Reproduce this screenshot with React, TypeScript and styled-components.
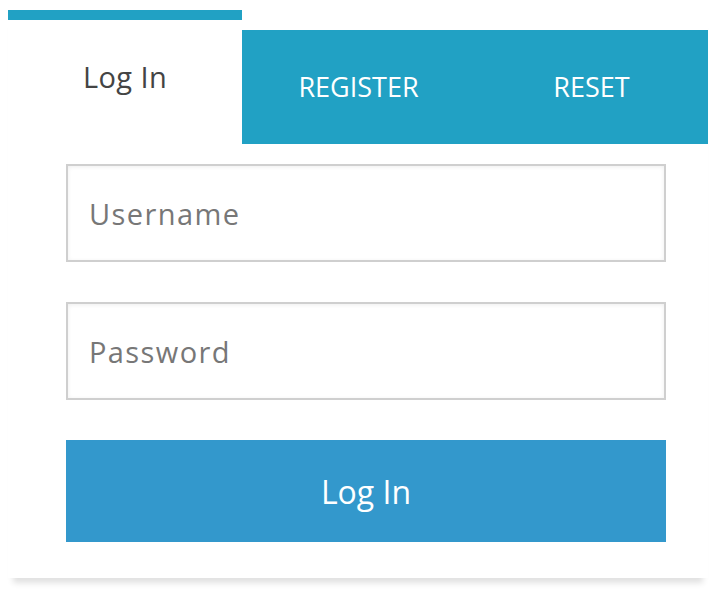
import React from "react";
import styled, { createGlobalStyle } from "styled-components";

const Global = createGlobalStyle`
  html, body { margin: 0; padding: 0; background: #fff; }
  body { font-family: "Open Sans", "Noto Sans", sans-serif; }
`;

const Page = styled.div`
  padding: 10px 12px 20px 8px;
`;

const Card = styled.div`
  width: 700px;
  background: #fff;
  box-shadow: 0 10px 6px -5px rgba(0, 0, 0, 0.12);
`;

const Tabs = styled.div`
  display: flex;
  align-items: flex-end;
`;

const Tab = styled.div<{ $active?: boolean; $w: number }>`
  width: ${(p) => p.$w}px;
  display: flex;
  align-items: center;
  justify-content: center;
  box-sizing: border-box;
  ${(p) =>
    p.$active
      ? `
    height: 134px;
    border-top: 10px solid #21a1c4;
    background: #fff;
    color: #444;
    font-size: 29px;
    letter-spacing: 0.4px;
    padding-bottom: 11px;
  `
      : `
    height: 114px;
    background: #21a1c4;
    color: #fff;
    font-size: 27px;
    text-transform: uppercase;
    padding-bottom: 2px;
  `}
`;

const Form = styled.div`
  display: flex;
  flex-direction: column;
  gap: 40px;
  padding: 20px 42px 36px 58px;
`;

const Input = styled.input`
  box-sizing: border-box;
  width: 600px;
  height: 98px;
  border: 2px solid #cfcfcf;
  box-shadow: inset 0 1px 4px rgba(0, 0, 0, 0.07);
  padding: 0 21px;
  font-family: "Open Sans", sans-serif;
  font-size: 29px;
  letter-spacing: 1.4px;
  color: #444;
  outline: none;
  &::placeholder { color: #777; }
`;

const Button = styled.button`
  box-sizing: border-box;
  width: 600px;
  height: 102px;
  border: none;
  background: #3398cc;
  color: #fff;
  font-family: "Open Sans", sans-serif;
  font-size: 32px;
  cursor: pointer;
`;

export default function App() {
  return (
    <Page>
      <Global />
      <Card>
        <Tabs>
          <Tab $active $w={234}>Log In</Tab>
          <Tab $w={233}>Register</Tab>
          <Tab $w={233}>Reset</Tab>
        </Tabs>
        <Form>
          <Input placeholder="Username" />
          <Input type="password" placeholder="Password" />
          <Button>Log In</Button>
        </Form>
      </Card>
    </Page>
  );
}
